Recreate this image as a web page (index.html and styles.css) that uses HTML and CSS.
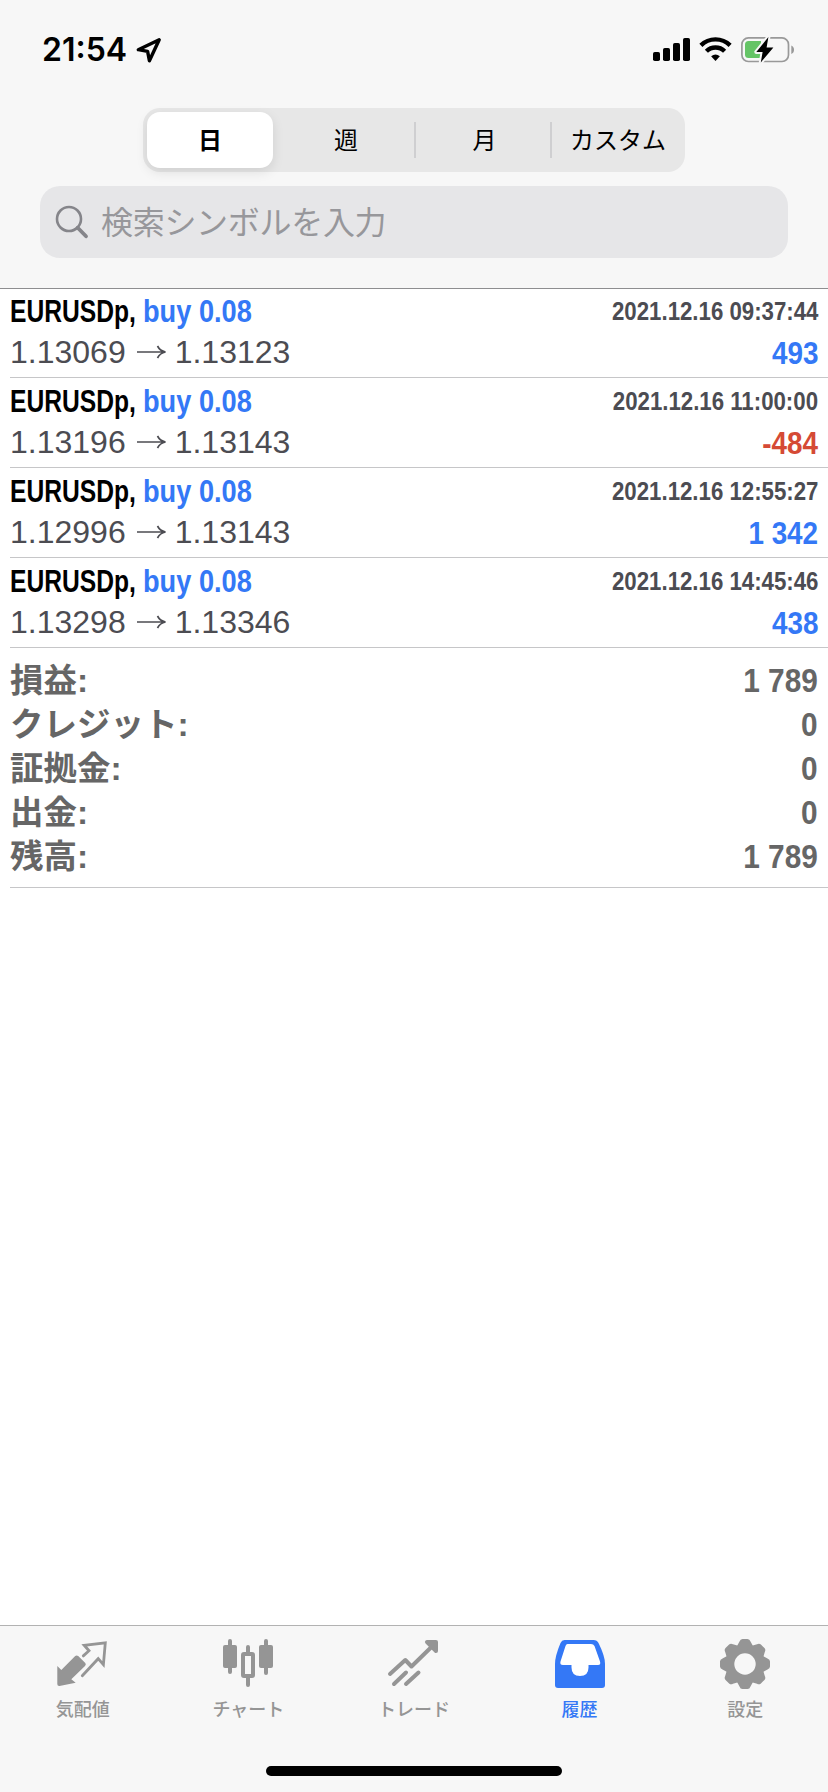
FILE: index.html
```html
<!DOCTYPE html>
<html lang="ja">
<head>
  <meta charset="utf-8">
  <title>履歴</title>
  <link rel="stylesheet" href="styles.css">
</head>
<body>
  <div class="header">
    <div class="status">
      <div class="status-left">
        <span class="time">21:54</span>
        <svg class="location" width="26" height="26" viewBox="0 0 26 26"><path d="M23.2 2.7 2.3 12.7 11.6 14.4 13.4 23.8Z" fill="none" stroke="#000" stroke-width="3.4" stroke-linejoin="round"/></svg>
      </div>
      <div class="status-right">
        <svg width="37" height="28" viewBox="0 0 37 28"><rect x="0" y="16" width="7" height="9" rx="1.8"/><rect x="10" y="12" width="7" height="13" rx="1.8"/><rect x="20" y="7" width="7" height="18" rx="1.8"/><rect x="30" y="2" width="7" height="23" rx="1.8"/></svg>
        <svg class="wifi" width="33" height="28" viewBox="0 0 33 28"><g fill="none" stroke="#000" stroke-width="4.4"><path d="M1.9 9.3A21 21 0 0 1 31.1 9.3"/><path d="M7.4 15.3A12.8 12.8 0 0 1 25.6 15.3"/></g><path d="M12.1 20.2Q16.5 17 20.9 20.2L16.5 25Z"/></svg>
        <svg class="battery" width="54" height="28" viewBox="0 0 54 28"><rect x=".9" y="1.9" width="46.6" height="23.6" rx="6.5" fill="none" stroke="#999" stroke-width="1.7"/><path d="M50.3 9.4Q53 10.5 53 13.7T50.3 18Z" fill="#999"/><path d="M7.5 5H20V22H7.5Q4 22 4 18.5V8.5Q4 5 7.5 5Z" fill="#65c466"/><path d="M27.4 1 25.6 11.5H32.4L19.8 26.4 21.6 16.1H15.3Z" stroke="#f7f7f7" stroke-width="4" stroke-linejoin="round" fill="#f7f7f7"/><path d="M27.4 1 25.6 11.5H32.4L19.8 26.4 21.6 16.1H15.3Z"/></svg>
      </div>
    </div>
    <div class="segment">
      <div class="seg checked">日</div>
      <div class="seg">週</div>
      <div class="seg line">月</div>
      <div class="seg line">カスタム</div>
    </div>
    <div class="search">
      <svg width="34" height="36" viewBox="0 0 34 36"><circle cx="14" cy="15" r="12" fill="none" stroke="#85858a" stroke-width="2.6"/><path d="M22.7 23.7 31 32.3" stroke="#85858a" stroke-width="3.8" stroke-linecap="round"/></svg>
      <span>検索シンボルを入力</span>
    </div>
  </div>

  <div class="list">
    <div class="row">
      <div class="top"><span class="symbol">EURUSDp,</span><span class="type">buy 0.08</span><span class="date">2021.12.16 09:37:44</span></div>
      <div class="bottom"><span>1.13069</span><svg class="arrow" width="30" height="14" viewBox="0 0 30 14"><path d="M0 7H28M20.5 1Q23 6 28.5 7Q23 8 20.5 13"/></svg><span>1.13123</span><span class="profit">493</span></div>
    </div>
    <div class="row">
      <div class="top"><span class="symbol">EURUSDp,</span><span class="type">buy 0.08</span><span class="date">2021.12.16 11:00:00</span></div>
      <div class="bottom"><span>1.13196</span><svg class="arrow" width="30" height="14" viewBox="0 0 30 14"><path d="M0 7H28M20.5 1Q23 6 28.5 7Q23 8 20.5 13"/></svg><span>1.13143</span><span class="profit loss">-484</span></div>
    </div>
    <div class="row">
      <div class="top"><span class="symbol">EURUSDp,</span><span class="type">buy 0.08</span><span class="date">2021.12.16 12:55:27</span></div>
      <div class="bottom"><span>1.12996</span><svg class="arrow" width="30" height="14" viewBox="0 0 30 14"><path d="M0 7H28M20.5 1Q23 6 28.5 7Q23 8 20.5 13"/></svg><span>1.13143</span><span class="profit">1 342</span></div>
    </div>
    <div class="row">
      <div class="top"><span class="symbol">EURUSDp,</span><span class="type">buy 0.08</span><span class="date">2021.12.16 14:45:46</span></div>
      <div class="bottom"><span>1.13298</span><svg class="arrow" width="30" height="14" viewBox="0 0 30 14"><path d="M0 7H28M20.5 1Q23 6 28.5 7Q23 8 20.5 13"/></svg><span>1.13346</span><span class="profit">438</span></div>
    </div>
    <div class="summary">
      <div class="total"><span>損益:</span><span class="num">1 789</span></div>
      <div class="total"><span>クレジット:</span><span class="num">0</span></div>
      <div class="total"><span>証拠金:</span><span class="num">0</span></div>
      <div class="total"><span>出金:</span><span class="num">0</span></div>
      <div class="total"><span>残高:</span><span class="num">1 789</span></div>
    </div>
  </div>

  <div class="footer">
    <div class="tabs">
      <div class="tab">
        <svg width="52" height="52" viewBox="0 0 52 52"><path d="M.3 28 4.3 32 18.2 18Q19.7 16.8 21.2 18L28.3 24.9Q29.5 26.4 28 27.9L14.3 41.3 18.7 44.7 2.5 48Q.3 48.2.3 46Z" fill="currentColor"/><path d="M26.3 17.9 32 12.7 27.2 7.3 48.3 4.8 46.4 26.7 41.2 20.7 25.3 37.7" fill="none" stroke="currentColor" stroke-width="2.8" stroke-linecap="round"/></svg>
        <span>気配値</span>
      </div>
      <div class="tab">
        <svg width="52" height="52" viewBox="0 0 52 52"><g stroke="currentColor" stroke-width="4" stroke-linecap="round"><path d="M8 3V34M26 9V16M26 40V47M44 3V35"/></g><g fill="currentColor"><rect x="1" y="7" width="14" height="23" rx="2"/><rect x="37" y="7" width="14" height="23" rx="2"/></g><rect x="21" y="16" width="10" height="22" rx="1" fill="none" stroke="currentColor" stroke-width="4"/></svg>
        <span>チャート</span>
      </div>
      <div class="tab">
        <svg width="52" height="52" viewBox="0 0 52 52"><g fill="none" stroke="currentColor" stroke-width="4" stroke-linecap="round" stroke-linejoin="round"><path d="M2 36 17.3 22 23.5 28.5 46.5 6M6 46 18 34.5M18 46 30.5 34.5"/><path d="M39 4H48V13Z" fill="currentColor"/></g></svg>
        <span>トレード</span>
      </div>
      <div class="tab on">
        <svg width="52" height="52" viewBox="0 0 52 52"><path d="M10.5 2H39.5Q43 2 44.5 5Q51 18 51 26V47Q51 50 48 50H4Q1 50 1 47V26Q1 18 6.5 5Q7.8 2 10.5 2Z" fill="currentColor"/><path d="M13.5 6H37Q39.5 6 40.5 8L46 23.5Q47 27 44 27H34.5V29.5Q34.5 38 26 38T17.5 29.5V27H9Q5.6 27 6.5 23.5L11.5 8Q12.2 6 13.5 6Z" fill="#fff"/></svg>
        <span>履歴</span>
      </div>
      <div class="tab">
        <svg width="52" height="52" viewBox="0 0 52 52"><g fill="currentColor"><path id="tooth" d="M17.5 9 20.5 3.5Q21.3 1 23.5 1H28.5Q30.7 1 31.5 3.5L34.5 9V43L31.5 48.5Q30.7 51 28.5 51H23.5Q21.3 51 20.5 48.5L17.5 43Z"/><use href="#tooth" transform="rotate(45 26 26)"/><use href="#tooth" transform="rotate(90 26 26)"/><use href="#tooth" transform="rotate(135 26 26)"/></g><circle cx="26" cy="26" r="10.7" fill="#f7f7f7"/></svg>
        <span>設定</span>
      </div>
    </div>
    <div class="home"></div>
  </div>
</body>
</html>
```
FILE: styles.css
```css
*{
  box-sizing: border-box;
}
body{
  margin: 0;
  height: 1792px;
  display: flex;
  flex-direction: column;
  background-color: #fff;
  font-family: "Liberation Sans", "Noto Sans CJK JP", sans-serif;
  overflow: hidden;
}
svg{
  display: block;
  flex: none;
  overflow: visible;
}
.header{
  height: 289px;
  background-color: #f7f7f7;
  border-bottom: 1px solid #8e8e90;
}
.status{
  height: 108px;
  padding: 36px 33px 0 42px;
  display: flex;
  justify-content: space-between;
}
.status-left,.status-right{
  display: flex;
  height: 28px;
}
.time{
  width: 94px;
  line-height: 28px;
  font-family: Inter, sans-serif;
  font-size: 32px;
  font-weight: 600;
}
.location{
  margin-top: 1px;
}
.wifi{
  margin-left: 9px;
}
.battery{
  margin-left: 9px;
}
.segment{
  width: 542px;
  height: 64px;
  margin: 0 auto;
  padding: 4px;
  display: grid;
  grid-template-columns: 126px 141px 136px 1fr;
  background-color: #e7e7e7;
  border-radius: 17px;
}
.seg{
  display: flex;
  align-items: center;
  justify-content: center;
  padding-left: 5px;
  padding-bottom: 3px;
  font-family: "Noto Sans CJK JP", sans-serif;
  font-size: 24px;
  line-height: 53px;
}
.seg.checked{
  padding-left: 0;
  background-color: #fff;
  border-radius: 13px;
  font-weight: 700;
  box-shadow: 0 4px 12px rgba(0,0,0,0.1);
}
.line{
  background: linear-gradient(#cfcfd1, #cfcfd1) left center / 2px 36px no-repeat;
}
.search{
  height: 72px;
  margin: 14px 40px 0;
  padding-left: 15px;
  display: flex;
  align-items: center;
  background-color: #e6e6e8;
  border-radius: 20px;
  color: #97979b;
  font-family: "Noto Sans CJK JP", sans-serif;
  font-size: 32px;
  letter-spacing: -0.3px;
}
.search span{
  margin-left: 12px;
  padding-bottom: 4px;
}
.list{
  flex: 1;
  padding-left: 10px;
}
.row{
  height: 90px;
  padding-right: 10px;
  padding-bottom: 5px;
  border-bottom: 1px solid #c6c6c8;
  display: flex;
  flex-direction: column;
  justify-content: flex-end;
}
.row:first-child{
  height: 89px;
}
.top,.bottom{
  height: 41px;
  display: flex;
  align-items: center;
  font-size: 32px;
  line-height: 41px;
  white-space: nowrap;
}
.bottom{
  height: 40px;
  line-height: 40px;
  color: #4c4c52;
}
/* condensed bold */
.symbol,.type,.date,.profit,.num{
  font-weight: 700;
  transform-origin: left center;
}
.symbol{
  width: 133px;
  transform: scaleX(0.77);
}
.type{
  color: #3478f6;
  transform: scaleX(0.85);
}
.date{
  margin-left: auto;
  color: #4c4c52;
  font-size: 26px;
  transform: scaleX(0.855);
  transform-origin: right center;
}
.profit,.num{
  margin-left: auto;
  color: #3478f6;
  transform: scaleX(0.87);
  transform-origin: right center;
}
.profit{
  padding-top: 1px;
}
.loss{
  color: #d54a35;
}
.arrow{
  margin: 0 8px 0 11px;
  fill: none;
  stroke: #4c4c52;
  stroke-width: 1.7;
}
.summary{
  height: 240px;
  padding: 11px 10px 0 0;
  border-bottom: 1px solid #c6c6c8;
}
.total{
  height: 44px;
  display: flex;
  align-items: center;
  color: #666;
  font-size: 33.5px;
  font-weight: 700;
  line-height: 44px;
}
.num{
  color: #666;
  font-size: 33.5px;
  transform: scaleX(0.89);
}
.footer{
  height: 167px;
  padding-top: 12px;
  background-color: #f7f7f7;
  border-top: 1px solid #b2b2b2;
}
.tabs{
  display: grid;
  grid-template-columns: repeat(5, 1fr);
  height: 128px;
}
.tab{
  display: flex;
  flex-direction: column;
  align-items: center;
  color: #959595;
  font-family: "Noto Sans CJK JP", sans-serif;
  font-size: 18px;
  font-weight: 500;
  line-height: 26px;
}
.tab span{
  margin-top: 5px;
}
.tab.on{
  color: #3478f6;
}
.home{
  width: 296px;
  height: 10px;
  margin: 0 auto;
  background-color: #000;
  border-radius: 5px;
}
```
